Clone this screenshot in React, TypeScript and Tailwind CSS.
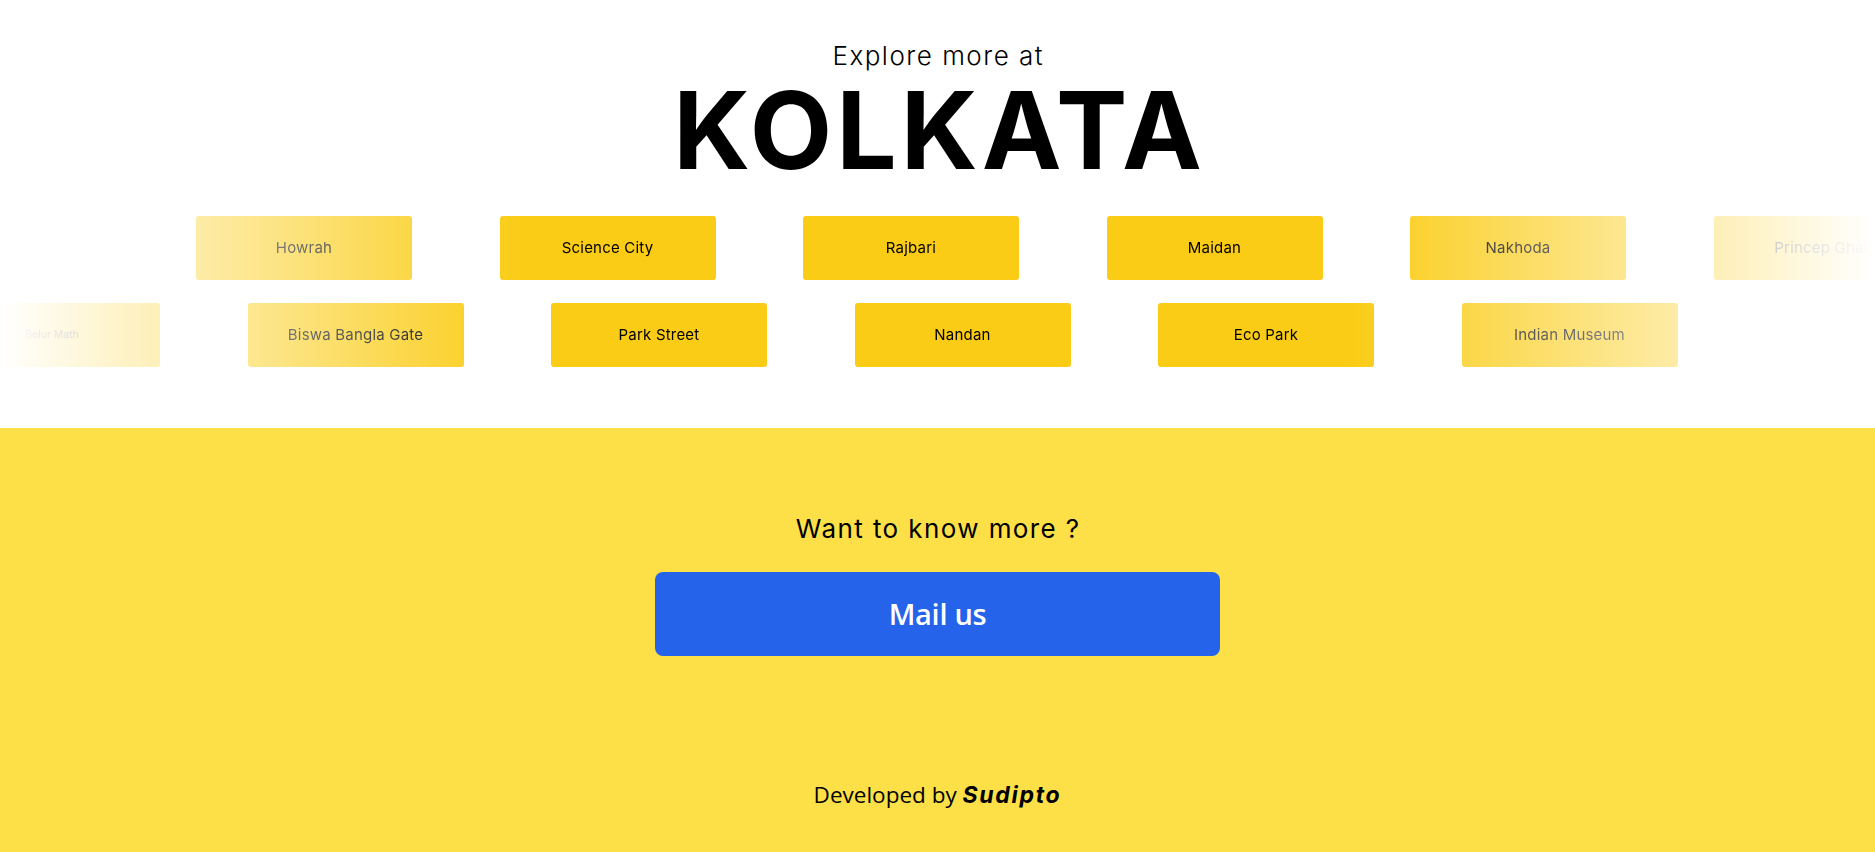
const row1 = ["Howrah", "Science City", "Rajbari", "Maidan", "Nakhoda", "Princep Ghat"];
const row2 = ["Belur Math", "Biswa Bangla Gate", "Park Street", "Nandan", "Eco Park", "Indian Museum"];

function Card({ label, small }: { label: string; small?: boolean }) {
  return (
    <div className="shrink-0 w-[216px] h-[64px] rounded-[3px] bg-[#facc15] flex items-center justify-center">
      <span
        className={
          small
            ? "font-['Inter'] text-[10.5px] text-black"
            : "font-['Inter'] text-[15px] tracking-[0.2px] text-black"
        }
      >
        {label}
      </span>
    </div>
  );
}

export default function App() {
  return (
    <div className="min-h-[852px] flex flex-col bg-white">
      <section className="h-[428px] overflow-hidden flex flex-col items-center pt-[42px]">
        <p className="font-['Inter'] font-light text-[26px] leading-[28px] tracking-[1.5px] pl-[1.5px] text-black">
          Explore more at
        </p>
        <h1 className="font-['Inter'] font-bold text-[107px] leading-[120px] tracking-[4px] pl-[4px] text-black">
          KOLKATA
        </h1>
        <div className="w-full mt-[26px] flex flex-col gap-[23px] [mask-image:linear-gradient(to_right,transparent_0%,black_28%,black_72%,transparent_100%)] [-webkit-mask-image:linear-gradient(to_right,transparent_0%,black_28%,black_72%,transparent_100%)]">
          <div className="flex gap-[87.5px] pl-[196px]">
            {row1.map((l) => (
              <Card key={l} label={l} />
            ))}
          </div>
          <div className="flex gap-[87.5px] ml-[-56px]">
            {row2.map((l, i) => (
              <Card key={l} label={l} small={i === 0} />
            ))}
          </div>
        </div>
      </section>
      <section className="flex-1 bg-[#fde047] flex flex-col items-center pt-[85px]">
        <p className="font-['Inter'] text-[26px] leading-[32px] tracking-[1.4px] pl-[1.4px] text-black">
          Want to know more ?
        </p>
        <button className="mt-[27px] w-[565px] h-[84px] rounded-lg bg-[#2563eb] text-white font-['Open_Sans'] font-semibold text-[29px] tracking-[-0.3px]">
          Mail us
        </button>
        <p className="mt-[125px] font-['Open_Sans'] text-[22.5px] leading-[28px] text-black">
          Developed by{" "}
          <span className="font-['Inter'] font-bold italic text-[23px] tracking-[1.7px]">Sudipto</span>
        </p>
      </section>
    </div>
  );
}
